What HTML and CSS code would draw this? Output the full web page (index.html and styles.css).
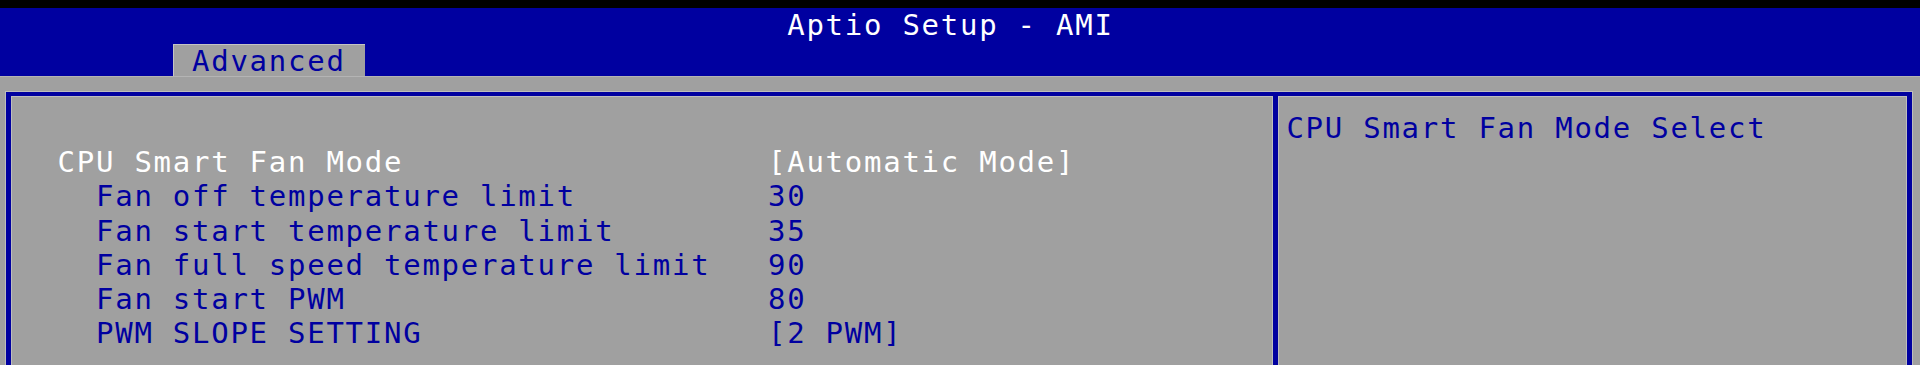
FILE: index.html
```html
<!DOCTYPE html>
<html lang="en">
<head>
<meta charset="utf-8">
<title>Aptio Setup - AMI</title>
<link rel="stylesheet" href="styles.css">
</head>
<body>
<div class="screen">
  <div class="topline"></div>
  <header class="header">
    <div class="title-row">Aptio Setup - AMI</div>
    <div class="tab-row"><div class="tab">Advanced</div></div>
  </header>
  <main class="body">
    <div class="frame">
      <section class="main-panel">
        <div class="row blank"></div>
        <div class="row item selected"><span class="label">CPU Smart Fan Mode</span><span class="value">[Automatic Mode]</span></div>
        <div class="row item sub"><span class="label">Fan off temperature limit</span><span class="value">30</span></div>
        <div class="row item sub"><span class="label">Fan start temperature limit</span><span class="value">35</span></div>
        <div class="row item sub"><span class="label">Fan full speed temperature limit</span><span class="value">90</span></div>
        <div class="row item sub"><span class="label">Fan start PWM</span><span class="value">80</span></div>
        <div class="row item sub"><span class="label">PWM SLOPE SETTING</span><span class="value">[2 PWM]</span></div>
      </section>
      <aside class="help-panel">
        <div class="row">CPU Smart Fan Mode Select</div>
      </aside>
    </div>
  </main>
</div>
</body>
</html>
```
FILE: styles.css
```css
:root {
  --cw: 19.2px;
  --rh: 34.2px;
  --blue: #0000a0;
  --gray: #a0a0a0;
  --edge: #bdbdbd;
}

html, body {
  margin: 0;
  padding: 0;
  background: #000;
  overflow: hidden;
}

.screen {
  width: 1920px;
  height: 365px;
  overflow: hidden;
  font-family: "DejaVu Sans Mono", "Liberation Mono", monospace;
  font-size: 29px;
  letter-spacing: 1.74px;
  line-height: var(--rh);
  white-space: nowrap;
}

.topline {
  height: 8px;
  background: #000;
}

.header {
  background: var(--blue);
  height: 68px;
  display: flex;
  flex-direction: column;
}

.title-row {
  height: var(--rh);
  color: #fff;
  padding-left: calc(var(--cw) * 41);
}

.tab-row {
  flex: 1;
  display: flex;
  align-items: flex-end;
}

.tab {
  margin-left: calc(var(--cw) * 9);
  width: calc(var(--cw) * 10);
  height: 32px;
  box-sizing: border-box;
  padding-left: calc(var(--cw) - 1px);
  background: var(--gray);
  color: var(--blue);
  line-height: 33px;
  border-top: 1px solid #c4c4c4;
  border-left: 1px solid #c4c4c4;
}

.body {
  background: var(--gray);
  height: 289px;
  overflow: hidden;
  display: flex;
  flex-direction: column;
  box-shadow: inset 0 1px 0 #b4b4b4;
}

.frame {
  flex: 1;
  margin: 16px 8px 0 6px;
  border-top: 4px solid var(--blue);
  border-left: 5px solid var(--blue);
  border-right: 5px solid var(--blue);
  box-shadow: 0 0 0 1px var(--edge), inset 0 1px 0 var(--edge), inset 1px 0 0 var(--edge), inset -1px 0 0 var(--edge);
  display: flex;
}

.main-panel {
  flex: 0 0 1267px;
  box-sizing: border-box;
  border-right: 5px solid var(--blue);
  box-shadow: 1px 0 0 var(--edge), inset -1px 0 0 var(--edge);
  padding: 15px 0 0 46.6px;
}

.help-panel {
  flex: 1;
  padding: 15px 0 0 8.4px;
  color: var(--blue);
}

.row {
  height: var(--rh);
}

.item {
  display: grid;
  grid-template-columns: calc(var(--cw) * 37) auto;
  color: var(--blue);
}

.item.selected {
  color: #fff;
}

.item.sub .label {
  padding-left: calc(var(--cw) * 2);
}
```
